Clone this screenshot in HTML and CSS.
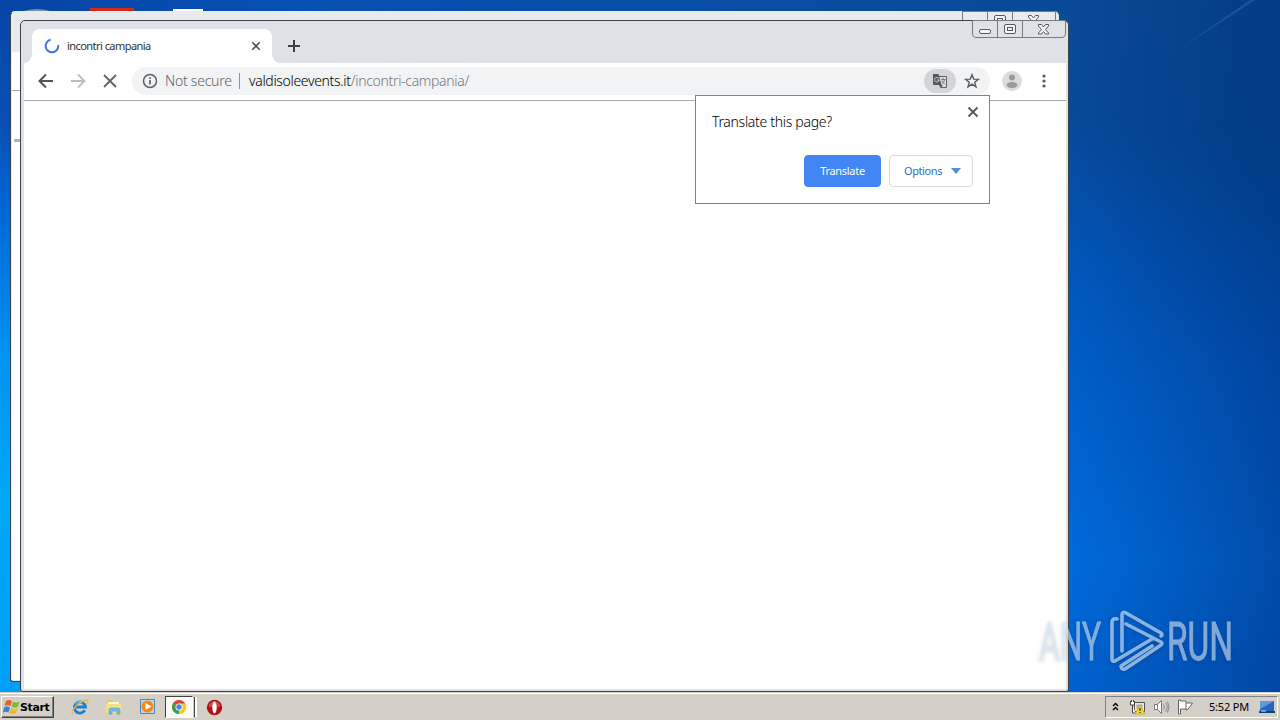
FILE: index.html
```
<!DOCTYPE html>
<html lang="en">
<head>
	<meta charset="utf-8">
	<title>incontri campania</title>
	<link rel="stylesheet" href="styles.css">
</head>
<body>
	<div class="desktop">
		<svg class="wallpaper" width="1280" height="720">
			<path d="M1178 50L1250 0h5z" fill="#5c94c8" opacity=".25"/>
			<path d="M24 11q13-4 26 0z" fill="#78909c"/>
			<path d="M90 8h44v4H90z" fill="#d42a1c"/>
			<path d="M173 9h30v3h-30z" fill="#fff"/>
		</svg>

		<div class="window window-back">
			<div class="caption">
				<span class="cap-btn"><svg width="25" height="17"><rect x="6.500" y="8.500" width="11" height="4" rx="1.500"/></svg></span>
				<span class="cap-btn"><svg width="25" height="17"><rect x="6.500" y="3.500" width="11" height="9" rx="1.500"/><rect x="9.500" y="6.500" width="5" height="3"/></svg></span>
				<span class="cap-btn cap-close"><svg width="42" height="17"><path d="M15.500 3.500h3l2 2.500 2-2.500h3v1.500l-3 3.500 3 3.500v1h-3l-2-2.500-2 2.500h-3v-1l3-3.500-3-3.500z"/></svg></span>
			</div>
			<div class="page"></div>
		</div>

		<div class="window window-front">
			<div class="caption">
				<span class="cap-btn"><svg width="25" height="17"><rect x="6.500" y="8.500" width="11" height="4" rx="1.500"/></svg></span>
				<span class="cap-btn"><svg width="25" height="17"><rect x="6.500" y="3.500" width="11" height="9" rx="1.500"/><rect x="9.500" y="6.500" width="5" height="3"/></svg></span>
				<span class="cap-btn cap-close"><svg width="42" height="17"><path d="M15.500 3.500h3l2 2.500 2-2.500h3v1.500l-3 3.500 3 3.500v1h-3l-2-2.500-2 2.500h-3v-1l3-3.500-3-3.500z"/></svg></span>
			</div>
			<div class="tabs">
				<div class="tab">
					<svg class="spinner" width="16" height="16" viewBox="0 0 16 16"><path d="M6.600 1.800A6.300 6.300 0 1 0 14.200 7" fill="none" stroke="#3b78d8" stroke-width="2"/></svg>
					<span class="tab-title">incontri campania</span>
					<svg width="10" height="10" viewBox="0 0 10 10"><path d="M1.200 1.200l7.600 7.600M8.800 1.200L1.200 8.800" stroke="#50545a" stroke-width="1.600"/></svg>
				</div>
				<svg class="new-tab" width="12" height="12" viewBox="0 0 12 12"><path d="M6 0v12M0 6h12" stroke="#3c4043" stroke-width="2"/></svg>
			</div>
			<div class="toolbar">
				<svg width="16" height="16" viewBox="0 0 16 16"><path d="M15 8H2M8 1.500L1.500 8 8 14.500" fill="none" stroke="#50545a" stroke-width="2"/></svg>
				<svg width="16" height="16" viewBox="0 0 16 16"><path d="M1 8h13M8 1.500L14.500 8 8 14.500" fill="none" stroke="#babcbe" stroke-width="1.800"/></svg>
				<svg width="16" height="16" viewBox="0 0 16 16"><path d="M2 2l12 12M14 2L2 14" stroke="#5f6368" stroke-width="1.800"/></svg>
				<div class="address">
					<svg width="16" height="16" viewBox="0 0 16 16"><circle cx="8" cy="8" r="6.500" fill="none" stroke="#5f6368" stroke-width="1.500"/><path d="M8 7v4.500M8 4.300V6" stroke="#5f6368" stroke-width="1.700"/></svg>
					<span class="not-secure">Not secure</span>
					<span class="divider"></span>
					<span class="url"><span class="host">valdisoleevents.it</span><span class="path">/incontri-campania/</span></span>
					<span class="translate-icon">
						<svg width="16" height="16" viewBox="0 0 16 16">
							<path d="M6.500 3.500h8v11H9" fill="#dadcde" stroke="#5f6368"/>
							<path d="M1 1h5.500l3 11H1.500L1 11z" fill="#54585c"/>
							<path d="M7 12h4l-2.500 3z" fill="#54585c"/>
							<path d="M6.700 5.300A2.300 2.300 0 1 0 7.200 7H5" fill="none" stroke="#ccced0"/>
							<path d="M9 6.500h4.500M11.200 5v1.500M12.700 6.500Q12 10 9.800 10.800M9.800 7.500q1 2.500 3 3.500" fill="none" stroke="#6b6f73" stroke-width=".8"/>
						</svg>
					</span>
					<svg class="star" width="16" height="16" viewBox="0 0 16 16"><path d="M8 1.700l1.700 4.400 4.700.2-3.700 2.900 1.300 4.600L8 11.200l-4 2.600 1.300-4.600-3.700-2.900 4.700-.2z" fill="none" stroke="#5a5e63" stroke-width="1.400"/></svg>
				</div>
				<svg class="avatar" width="20" height="20" viewBox="0 0 20 20"><circle cx="10" cy="10" r="10" fill="#dcdcdc"/><circle cx="10" cy="6.500" r="3" fill="#9a9a9a"/><path d="M4.500 14.500q0-3.500 5.500-3.500t5.500 3.500Q14 17 10 17t-5.500-2.500z" fill="#9a9a9a"/></svg>
				<svg class="menu" width="4" height="14" viewBox="0 0 4 14"><g fill="#5a5e63"><circle cx="2" cy="2" r="1.600"/><circle cx="2" cy="7" r="1.600"/><circle cx="2" cy="12" r="1.600"/></g></svg>
			</div>
			<div class="page"></div>
		</div>

		<div class="bubble">
			<div class="bubble-head">
				<span>Translate this page?</span>
				<svg width="12" height="12" viewBox="0 0 12 12"><path d="M1.500 1.500l9 9M10.500 1.500l-9 9" stroke="#5a5a5a" stroke-width="1.900"/></svg>
			</div>
			<div class="bubble-buttons">
				<button class="btn primary">Translate</button>
				<button class="btn options">Options <svg width="10" height="6"><path d="M0 0h10L5 6z" fill="#4a90e2"/></svg></button>
			</div>
		</div>

		<svg class="watermark" width="240" height="80" viewBox="0 0 240 80">
			<g class="wm-text">
				<text x="15" y="60" textLength="62" lengthAdjust="spacingAndGlyphs">ANY</text>
				<text x="143" y="60" textLength="66" lengthAdjust="spacingAndGlyphs">RUN</text>
			</g>
			<path class="wm-logo" d="M93 19q-5-1-5 3v37q0 3 3 2l37-22M98 51V15q0-4 4-2l35 20q2 2 0 3M102 24l35 18q2 1.500 0 3l-36 24q-4 1-4-3l31-20"/>
		</svg>

		<div class="taskbar">
			<div class="start">
				<svg width="18" height="16" viewBox="0 0 18 16">
					<path d="M3 2q3-2 6 0L7.500 7Q4.500 5.500 1.500 7z" fill="#e8602c"/>
					<path d="M10 2.500q3 2 6.500 0L15 7.500q-3 2-6.500 0z" fill="#7db83c"/>
					<path d="M1 8.500q3-2 6 0L5.500 13.500Q3 12 0 13.500z" fill="#3c80cc"/>
					<path d="M8 9q3 2 6.500 0L13 14q-3.500 2-6.500 0z" fill="#f4b820"/>
				</svg>
				<span>Start</span>
			</div>
			<div class="quick">
				<svg width="18" height="18" viewBox="0 0 18 18">
					<path d="M13.800 12.300A5.600 5.600 0 1 1 14.500 9H5" fill="none" stroke="#1d7fce" stroke-width="2.800"/>
					<path d="M2 16Q-1 14 5 8T16.500 2q1 1-.5 4" fill="none" stroke="#e8b83c" stroke-width="1.300"/>
					<path d="M4.500 6q3-4 7-2" fill="none" stroke="#7bcaf4"/>
				</svg>
				<svg width="18" height="18" viewBox="0 0 18 18">
					<path d="M2 2h5l1 2h7v11H2z" fill="#e7c965"/>
					<path d="M3 4h11v3H3z" fill="#fff8ce"/>
					<path d="M1 6h15v9H1z" fill="#f4df8c"/>
					<path d="M4 16v-4q0-2 2-2h7q2 0 2 2v4h-3v-3H7v3z" fill="#70bce4" stroke="#4c9cc8" stroke-width=".6"/>
				</svg>
				<svg width="18" height="18" viewBox="0 0 18 18">
					<path d="M1.500 1.500h14v14h-14z" fill="#b8d7f0" stroke="#4c86bd"/>
					<circle cx="8.500" cy="8.500" r="6" fill="#f58a12"/>
					<path d="M6.500 5l6 3.500-6 3.500z" fill="#fff"/>
				</svg>
				<span class="active-app">
					<svg width="16" height="16" viewBox="0 0 16 16">
						<circle cx="8" cy="8" r="7" fill="#f8c820"/>
						<path d="M8 8L1.900 4.500A7 7 0 0 1 14.100 4.500z" fill="#dc4434"/>
						<path d="M1.900 4.500L8 8v7A7 7 0 0 1 1.900 4.500z" fill="#35a155"/>
						<path d="M8 4.500h6.100A7 7 0 0 1 8 15l3-5z" fill="#f8c820"/>
						<circle cx="8" cy="8" r="3.500" fill="#fff"/>
						<circle cx="8" cy="8" r="2.700" fill="#4284ec"/>
					</svg>
				</span>
				<span class="app-edge"></span>
				<svg class="opera" width="17" height="17" viewBox="0 0 17 17"><circle cx="8.500" cy="8.500" r="7.700" fill="#b80d15"/><path d="M3 5q5.500-6 11 0v3H3z" fill="#cc4644"/><ellipse cx="8.500" cy="8.500" rx="2.200" ry="6" fill="#fff"/></svg>
			</div>
			<div class="tray">
				<svg class="chevrons" width="7" height="9" viewBox="0 0 7 9"><path d="M1 4l2.500-2.500L6 4M1 8l2.500-2.500L6 8" fill="none" stroke="#000" stroke-width="1.400"/></svg>
				<svg class="net" width="17" height="16" viewBox="0 0 17 16">
					<path d="M5.500 3.500h10v9h-10z" fill="#e8e8e8" stroke="#555"/>
					<path d="M7.500 5.500h6v5h-6z" fill="#aaa"/>
					<path d="M1.500 2v4h4V2M2.500 1v2M4.500 1v2M3.500 6v8h3" fill="#fff" stroke="#444"/>
					<path d="M11 6l5 9H6z" fill="#f8da20" stroke="#c0a000" stroke-width=".6"/>
					<path d="M11 9v3M11 13v1" stroke="#222" stroke-width="1.200"/>
				</svg>
				<svg class="sound" width="17" height="16" viewBox="0 0 17 16"><path d="M1.500 5.500h3l4-4v13l-4-4h-3zM4.500 5.500v5" fill="#fff" stroke="#777"/><path d="M10.500 5.500q2 2.500 0 5M12.500 3.500q3.500 4.500 0 9M14.500 2.500q3 5.500 0 11" fill="none" stroke="#888"/></svg>
				<svg class="flag" width="17" height="16" viewBox="0 0 17 16"><path d="M1.500 1v14h2v-5h5.500v1q2-.5 3-2L15.500 4H9V2H3.500V1z" fill="#fff" stroke="#666"/><path d="M9 4v6" stroke="#777"/></svg>
				<span class="clock">5:52 PM</span>
				<svg class="show-desktop" width="16" height="14" viewBox="0 0 16 14"><path d="M1 1h14v10H1z" fill="#2666bd"/><path d="M1 1h14L1 9z" fill="#5c9be0"/><path d="M0 11h16v2H0z" fill="#123d7b"/><path d="M2 11h5" stroke="#d8e8f8"/></svg>
			</div>
		</div>
	</div>
</body>
</html>
```
FILE: styles.css
```
body {
	margin: 0;
	font-family: "Noto Sans", "Liberation Sans", sans-serif;
	color: #000;
}
svg {
	display: block;
	flex: none;
}
.desktop {
	position: relative;
	width: 1280px;
	height: 720px;
	overflow: hidden;
	background:
		radial-gradient(ellipse 240px 220px at 1290px 150px, rgba(0,60,120,0.35), rgba(0,60,120,0) 100%) no-repeat,
		linear-gradient(90deg, transparent 1060px, rgba(0,45,120,0.5) 1280px),
		linear-gradient(180deg, #0a4a96 0, #074b9d 130px, #0057bb 260px, #0062ce 410px, #006cdd 560px, #0062d0 692px);
}
.desktop::before {
	content: "";
	position: absolute;
	left: 0;
	top: 0;
	width: 1060px;
	height: 692px;
	background:
		linear-gradient(90deg, transparent 30px, #0751b4 300px, #0a4a96 1060px) 0 0 / 100% 30px no-repeat,
		linear-gradient(180deg, #0645a5 0, #0750b8 130px, #006ad7 220px, #0092ef 350px, #00a8f5 500px, #009ff6 692px);
}
.wallpaper {
	position: absolute;
	left: 0;
	top: 0;
}

/* windows */
.window {
	position: absolute;
	box-sizing: border-box;
	width: 1049px;
	height: 671px;
	border: 1px solid #3b444e;
	border-radius: 5px 5px 3px 3px;
	background: #dee1e6;
	padding: 0 2px 2px;
	display: flex;
	flex-direction: column;
}
.window-back {
	left: 10px;
	top: 11px;
	border-top-color: #e8eaec;
	border-right-color: #e1e3e5;
	background: #e8eaec;
	padding: 40px 2px 1px 1px;
}
.window-back .page {
	background:
		linear-gradient(#aaa, #aaa) 0 38px / 10px 1px no-repeat,
		linear-gradient(#b4b4b4, #b4b4b4) 2px 87px / 8px 3px no-repeat,
		#fff;
}
.window-front {
	left: 20px;
	top: 20px;
	height: 672px;
	padding-left: 3px;
}
.caption {
	position: absolute;
	top: -1px;
	right: 2px;
	display: flex;
	height: 16px;
	border: 1px solid #747a82;
	border-radius: 0 0 4px 4px;
}
.cap-btn {
	width: 24px;
	border-right: 1px solid #747a82;
}
.cap-close {
	width: 42px;
	border-right: 0;
}
.cap-btn svg {
	fill: #f4f5f6;
	stroke: #555962;
}
.tabs {
	flex: none;
	height: 42px;
	display: flex;
	align-items: flex-end;
}
.tab {
	position: relative;
	box-sizing: border-box;
	width: 240px;
	height: 34px;
	margin-left: 8px;
	padding: 0 11px 0 12px;
	border-radius: 8px 8px 0 0;
	background: #fff;
	display: flex;
	align-items: center;
}
.tab::before,
.tab::after {
	content: "";
	position: absolute;
	bottom: 0;
	width: 8px;
	height: 8px;
}
.tab::before {
	left: -8px;
	background: radial-gradient(circle at 0 0, transparent 7.5px, #fff 8px);
}
.tab::after {
	right: -8px;
	background: radial-gradient(circle at 100% 0, transparent 7.5px, #fff 8px);
}
.tab-title {
	flex: 1;
	margin: 0 0 2px 7px;
	font-size: 11px;
	letter-spacing: -0.55px;
	color: #303236;
}
.new-tab {
	margin: 0 0 11px 16px;
}
.toolbar {
	flex: none;
	box-sizing: border-box;
	height: 38px;
	padding: 0 17px 1px 14px;
	border-bottom: 1px solid #aaa;
	background: #fff;
	display: flex;
	align-items: center;
	gap: 16px;
}
.address {
	box-sizing: border-box;
	width: 858px;
	height: 28px;
	margin-left: -2px;
	padding: 0 10px;
	border-radius: 14px;
	background: #f1f3f4;
	display: flex;
	align-items: center;
	font-size: 14px;
	font-weight: 300;
	white-space: nowrap;
}
.not-secure {
	width: 66px;
	margin: 0 0 2px 7px;
	letter-spacing: -0.25px;
	color: #5f6368;
}
.divider {
	width: 1px;
	height: 16px;
	margin: 0 9px 0 8px;
	background: #909498;
}
.url {
	flex: 1;
	margin-bottom: 2px;
}
.host {
	letter-spacing: -0.33px;
	color: #000;
}
.path {
	letter-spacing: -0.32px;
	color: #74787c;
}
.translate-icon {
	width: 32px;
	height: 24px;
	border-radius: 12px;
	background: #d3d5d7;
	display: flex;
	align-items: center;
	justify-content: center;
}
.star {
	margin-left: 8px;
}
.avatar {
	margin-left: -4px;
}
.menu {
	margin-left: 4px;
}
.page {
	flex: 1;
	background: #fff;
}

/* translate bubble */
.bubble {
	position: absolute;
	left: 695px;
	top: 95px;
	box-sizing: border-box;
	width: 295px;
	height: 109px;
	padding: 10px 16px 16px;
	border: 1px solid #808286;
	background: #fff;
}
.bubble-head {
	display: flex;
	justify-content: space-between;
	height: 49px;
	font-size: 14px;
	font-weight: 300;
	line-height: 32px;
	letter-spacing: -0.3px;
}
.bubble-head svg {
	margin-right: -6px;
}
.bubble-buttons {
	display: flex;
	justify-content: flex-end;
	gap: 8px;
}
.btn {
	box-sizing: border-box;
	width: 84px;
	height: 32px;
	padding: 0 0 2px;
	border: 1px solid #d8dadd;
	border-radius: 4px;
	background: #fff;
	color: #2a6fc0;
	font: 11px "Noto Sans", "Liberation Sans", sans-serif;
	letter-spacing: -0.3px;
	display: flex;
	align-items: center;
	justify-content: center;
	gap: 9px;
}
.options {
	padding-left: 3px;
	letter-spacing: -0.4px;
}
.options svg {
	margin-top: 2px;
}
.primary {
	width: 77px;
	border-color: #4285f4;
	background: #4285f4;
	color: #fff;
}

.watermark {
	position: absolute;
	left: 1024px;
	top: 600px;
	overflow: visible;
	filter: drop-shadow(0 1px 2px rgba(0,0,0,0.25));
}
.wm-text {
	font-family: Roboto, sans-serif;
	font-size: 53px;
	fill: #d7e8fa;
	stroke: #d7e8fa;
	stroke-width: 0.8;
	opacity: 0.6;
}
.wm-logo {
	fill: none;
	stroke: rgba(195,220,248,0.7);
	stroke-width: 3.6;
	stroke-linejoin: round;
	stroke-linecap: round;
}

/* taskbar */
.taskbar {
	position: absolute;
	left: 0;
	bottom: 0;
	box-sizing: border-box;
	width: 1280px;
	height: 28px;
	padding: 1px 2px 0 1px;
	border-top: 1px solid #d4d0c8;
	box-shadow: inset 0 1px #fff;
	background: #d4d0c8;
	display: flex;
	align-items: center;
}
.start {
	box-sizing: border-box;
	width: 53px;
	height: 22px;
	padding-left: 1px;
	border: 1px solid;
	border-color: #fff #404040 #404040 #fff;
	box-shadow: inset -1px -1px #808080;
	display: flex;
	align-items: center;
	font: bold 11px "DejaVu Sans", sans-serif;
	letter-spacing: -0.4px;
}
.start span {
	margin-left: -1px;
}
.quick {
	display: flex;
	align-items: center;
	gap: 16px;
	margin-left: 17px;
}
.active-app {
	box-sizing: border-box;
	width: 28px;
	height: 22px;
	margin-left: -8px;
	padding: 2px 5px;
	border: 1px solid;
	border-color: #404040 #fff #fff #404040;
	background: #fbfaf8;
}
.app-edge {
	width: 2px;
	height: 20px;
	margin: 0 -6px 0 -15px;
	border-left: 1px solid #404040;
	background: #fff;
}
.opera {
	margin-left: -1px;
}
.tray {
	box-sizing: border-box;
	width: 173px;
	height: 22px;
	margin-left: auto;
	padding: 0 2px 0 6px;
	border: 1px solid;
	border-color: #808080 #fff #fff #808080;
	display: flex;
	align-items: center;
}
.chevrons {
	margin-bottom: 2px;
}
.net {
	margin-left: 10px;
}
.sound,
.flag {
	margin-left: 7px;
}
.clock {
	margin: 0 0 1px 15px;
	font-size: 11px;
	letter-spacing: -0.2px;
	white-space: nowrap;
}
.show-desktop {
	margin-left: auto;
}
```
